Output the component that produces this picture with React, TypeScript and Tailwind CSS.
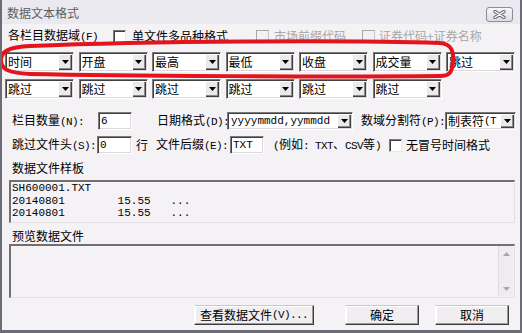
import React from "react";

const cjk = "font-['Noto_Sans_CJK_SC','Liberation_Sans',sans-serif]";
const mono = "font-['Liberation_Mono',monospace]";

const sunken =
  "border border-t-[#7a7a7a] border-l-[#7a7a7a] border-r-white border-b-white shadow-[inset_1px_1px_0_#404040,inset_-1px_-1px_0_#dcd8dc]";
const raised =
  "bg-[#f0eef0] border border-t-[#c8c8c8] border-l-white border-r-[#3c3c3c] border-b-[#3c3c3c] shadow-[inset_-1px_-1px_0_#9a9a9a,inset_1px_1px_0_#ffffff]";

// ascii parts of the labels, 6px a char like the old bitmap font
const Asc = ({ children }: { children: React.ReactNode }) => (
  <span className={`${mono} text-[11px] tracking-[-0.6px]`}>{children}</span>
);

const ArrowBtn = () => (
  <div className="m-[1px] w-[14px] flex items-center justify-center bg-[#ece9ec] shadow-[inset_1px_1px_0_#ffffff,inset_-1px_-1px_0_#404040,inset_-2px_-2px_0_#8a8a8a]">
    <svg width="7" height="4" viewBox="0 0 7 4">
      <path d="M0 0h7L3.5 4z" fill="#000" />
    </svg>
  </div>
);

interface ComboProps {
  text: React.ReactNode;
  className?: string;
  textClass?: string;
}

const Combo = ({ text, className = "", textClass = "" }: ComboProps) => (
  <div className={`flex bg-white ${sunken} ${className}`}>
    <div
      className={`flex-1 overflow-hidden whitespace-nowrap flex items-center pl-[2px] ${textClass}`}
    >
      {text}
    </div>
    <ArrowBtn />
  </div>
);

const Input = ({ text, className = "" }: { text: string; className?: string }) => (
  <div
    className={`h-[18px] bg-white flex items-center pl-[2px] ${mono} text-[11px] ${sunken} ${className}`}
  >
    {text}
  </div>
);

const Check = ({ disabled = false }: { disabled?: boolean }) => (
  <div
    className={
      disabled
        ? "w-[13px] h-[13px] shrink-0 bg-[#f3f1f3] border border-t-[#a8a8a8] border-l-[#a8a8a8] border-r-[#c8c8c8] border-b-[#c8c8c8]"
        : "w-[13px] h-[13px] shrink-0 bg-white border border-t-[#7a7a7a] border-l-[#7a7a7a] border-r-[#e8e8e8] border-b-[#e8e8e8] shadow-[inset_1px_1px_0_#404040]"
    }
  />
);

const Button = ({ children, className = "" }: { children: React.ReactNode; className?: string }) => (
  <div className={`h-[20px] flex items-center justify-center text-[12px] ${raised} ${className}`}>
    {children}
  </div>
);

const row1 = ["时间", "开盘", "最高", "最低", "收盘", "成交量", "跳过"];

const App = () => {
  return (
    <div
      className={`relative w-[522px] h-[333px] overflow-hidden flex flex-col bg-[#f5f2f5] border-l-2 border-r-2 border-b-[3px] border-[#6c6c76] text-[12px] text-black ${cjk}`}
    >
      {/* title bar */}
      <div className="h-[24px] shrink-0 flex items-start justify-between pl-[5px] pr-[7px] bg-[#eae9ef]">
        <span className="mt-[5px] leading-[16px] text-[#5e5e5e]">数据文本格式</span>
        <div className="mt-[7px] w-[27px] h-[15px] rounded-[3px] border border-[#8c8c9a] bg-gradient-to-b from-[#f6f6f8] to-[#dcdce4] flex items-center justify-center">
          <svg width="13" height="9" viewBox="0 0 13 9">
            <path d="M2 1.5L11 7.5M11 1.5L2 7.5" stroke="#6e6e7c" strokeWidth="3.4" strokeLinecap="round" />
            <path d="M2 1.5L11 7.5M11 1.5L2 7.5" stroke="#ffffff" strokeWidth="1.4" strokeLinecap="round" />
          </svg>
        </div>
      </div>

      {/* field checkboxes */}
      <div className="mt-[4px] h-[16px] flex items-center leading-[16px] whitespace-nowrap">
        <span className="ml-[6px] w-[105px]">
          各栏目数据域<Asc>(F)</Asc>
        </span>
        <Check />
        <span className="ml-[6px] w-[124px]">单文件多品种格式</span>
        <Check disabled />
        <span className="ml-[5px] w-[88px] text-[#a6a6a6]">市场前缀代码</span>
        <Check disabled />
        <span className="ml-[4px] text-[#a6a6a6]">证券代码+证券名称</span>
      </div>

      {/* column combos */}
      <div className="mt-[8px] ml-[3px] grid grid-cols-[repeat(7,69px)] gap-x-[4.5px] gap-y-[7px]">
        {row1.map((t) => (
          <Combo key={t} text={t} className="h-[20px]" />
        ))}
        {[0, 1, 2, 3, 4, 5].map((i) => (
          <Combo key={i} text="跳过" className="h-[20px]" />
        ))}
      </div>

      {/* count / date / separator */}
      <div className="mt-[13px] h-[18px] flex items-center whitespace-nowrap">
        <span className="ml-[10px] w-[86px]">
          栏目数量<Asc>(N):</Asc>
        </span>
        <Input text="6" className="w-[34px]" />
        <span className="ml-[25px] w-[70px]">
          日期格式<Asc>(D):</Asc>
        </span>
        <Combo
          text="yyyymmdd,yymmdd"
          className="w-[126px] h-[18px]"
          textClass={`${mono} text-[11px] pl-[3px]`}
        />
        <span className="ml-[8px] w-[84px]">
          数域分割符<Asc>(P):</Asc>
        </span>
        <Combo
          text={
            <>
              制表符<Asc>(T</Asc>
            </>
          }
          className="w-[71px] h-[18px]"
        />
      </div>

      {/* header skip / suffix */}
      <div className="mt-[6px] h-[18px] flex items-center whitespace-nowrap">
        <span className="ml-[10px] w-[85px]">
          跳过文件头<Asc>(S):</Asc>
        </span>
        <Input text="0" className="w-[35px]" />
        <span className="ml-[4px] w-[12px]">行</span>
        <span className="ml-[8px] w-[74px]">
          文件后缀<Asc>(E):</Asc>
        </span>
        <Input text="TXT" className="w-[34px]" />
        <span className="ml-[9px] w-[116px]">
          <Asc>(</Asc>例如<Asc>: TXT</Asc>、<Asc>CSV</Asc>等<Asc>)</Asc>
        </span>
        <Check />
        <span className="ml-[4px]">无冒号时间格式</span>
      </div>

      <div className="mt-[6px] h-[16px] ml-[10px] leading-[16px]">数据文件样板</div>
      <div
        className={`mt-[4px] ml-[7px] w-[506px] h-[43px] pl-[1px] border-t-2 border-l-2 border-r border-b border-t-[#707070] border-l-[#707070] border-r-[#e2dee2] border-b-[#e2dee2] ${mono} text-[11px] leading-[12.5px] whitespace-pre`}
      >
        <div>SH600001.TXT</div>
        <div>20140801        15.55   ...</div>
        <div>20140801        15.55   ...</div>
      </div>

      <div className="mt-[5px] h-[16px] ml-[10px] leading-[16px]">预览数据文件</div>
      <div className="ml-[7px] w-[506px] h-[54px] flex justify-end border-t-2 border-l-2 border-r border-b border-t-[#707070] border-l-[#707070] border-r-[#e2dee2] border-b-[#e2dee2]">
        <div className="mr-[1px] w-[15px] h-[50px] flex flex-col items-center justify-between pt-[6px] pb-[5px] bg-[#eeecee] border-l border-[#e0dee0]">
          <svg width="7" height="4" viewBox="0 0 7 4">
            <path d="M0 4h7L3.5 0z" fill="#a8a8a8" />
          </svg>
          <svg width="7" height="4" viewBox="0 0 7 4">
            <path d="M0 0h7L3.5 4z" fill="#a8a8a8" />
          </svg>
        </div>
      </div>

      {/* buttons */}
      <div className="mt-[7px] flex">
        <Button className="ml-[192px] w-[120px]">
          查看数据文件<Asc>(V)...</Asc>
        </Button>
        <Button className="ml-[31px] w-[74px]">确定</Button>
        <Button className="ml-[16px] w-[74px]">取消</Button>
      </div>

      {/* red marker drawn round the first combo row */}
      <svg
        className="absolute left-[-2px] top-0 pointer-events-none"
        width="522"
        height="100"
        viewBox="0 0 522 100"
      >
        <path
          d="M30 46 C150 41, 350 40, 440 43 C452 44, 454 52, 453 62 C452 72, 450 76, 440 76 C330 77, 120 76, 30 74 C6 73, 1 68, 1 60 C1 52, 8 47, 30 46 Z"
          fill="none"
          stroke="#e3141c"
          strokeWidth="4"
        />
      </svg>
    </div>
  );
};

export default App;
